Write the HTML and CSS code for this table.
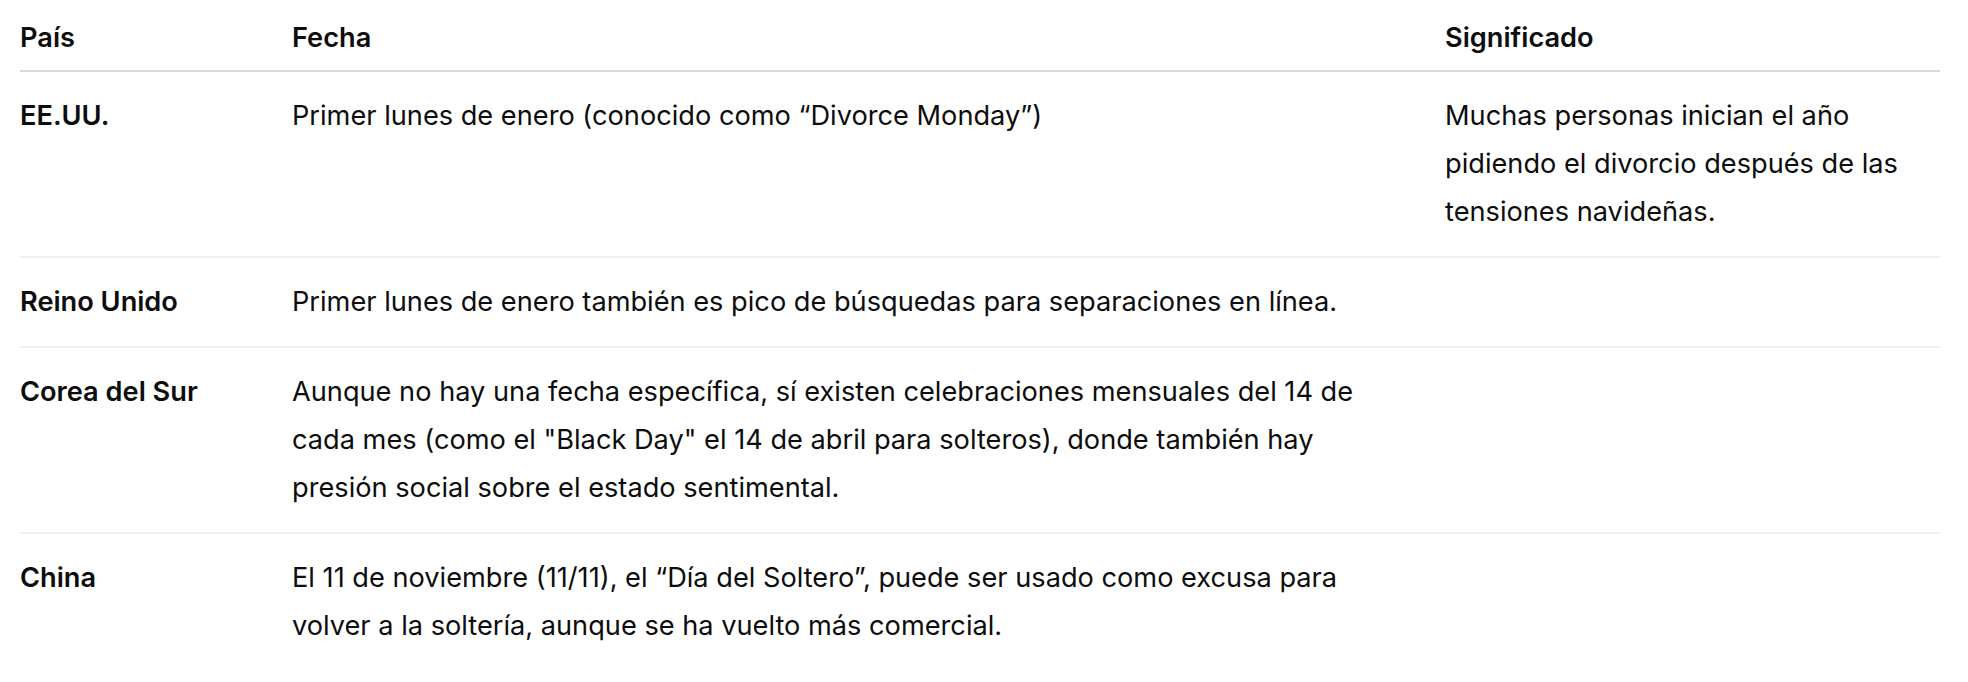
FILE: index.html
```html
<!DOCTYPE html>
<html lang="es">
<head>
<meta charset="utf-8">
<title>Tabla</title>
<link rel="stylesheet" href="styles.css">
</head>
<body>
<div class="page">
  <table class="data">
    <colgroup>
      <col class="c-pais">
      <col class="c-fecha">
      <col class="c-sig">
    </colgroup>
    <thead>
      <tr>
        <th>País</th>
        <th class="mid">Fecha</th>
        <th>Significado</th>
      </tr>
    </thead>
    <tbody>
      <tr>
        <td class="country">EE.UU.</td>
        <td class="mid">Primer lunes de enero (conocido como “Divorce Monday”)</td>
        <td>Muchas personas inician el año pidiendo el divorcio después de las tensiones navideñas.</td>
      </tr>
      <tr>
        <td class="country">Reino Unido</td>
        <td class="mid">Primer lunes de enero también es pico de búsquedas para separaciones en línea.</td>
        <td></td>
      </tr>
      <tr>
        <td class="country">Corea del Sur</td>
        <td class="mid">Aunque no hay una fecha específica, sí existen celebraciones mensuales del 14 de cada mes (como el "Black Day" el 14 de abril para solteros), donde también hay presión social sobre el estado sentimental.</td>
        <td></td>
      </tr>
      <tr>
        <td class="country">China</td>
        <td class="mid">El 11 de noviembre (11/11), el “Día del Soltero”, puede ser usado como excusa para volver a la soltería, aunque se ha vuelto más comercial.</td>
        <td></td>
      </tr>
    </tbody>
  </table>
</div>
</body>
</html>
```
FILE: styles.css
```css
html, body {
  margin: 0;
  padding: 0;
  background: #ffffff;
}

.page {
  padding: 14px 28px 0 20px;
  font-family: Inter, "Noto Sans", "Liberation Sans", sans-serif;
  font-size: 27.2px;
  line-height: 47.6px;
  color: #0d0d0d;
}

.data {
  width: 1920px;
  border-collapse: collapse;
  table-layout: fixed;
}

.c-pais { width: 272px; }
.c-fecha { width: 1153px; }
.c-sig { width: 495px; }

.data th {
  text-align: left;
  font-weight: 600;
  padding: 0 0 8.5px 0;
  border-bottom: 2px solid #d9d9d9;
  vertical-align: bottom;
}

.data td {
  padding: 20.4px 0;
  vertical-align: top;
  border-bottom: 2px solid #efefef;
}

.data tbody tr:last-child td {
  border-bottom: none;
}

.data .mid {
  padding-right: 60px;
}

.data td.country {
  font-weight: 600;
}
```
